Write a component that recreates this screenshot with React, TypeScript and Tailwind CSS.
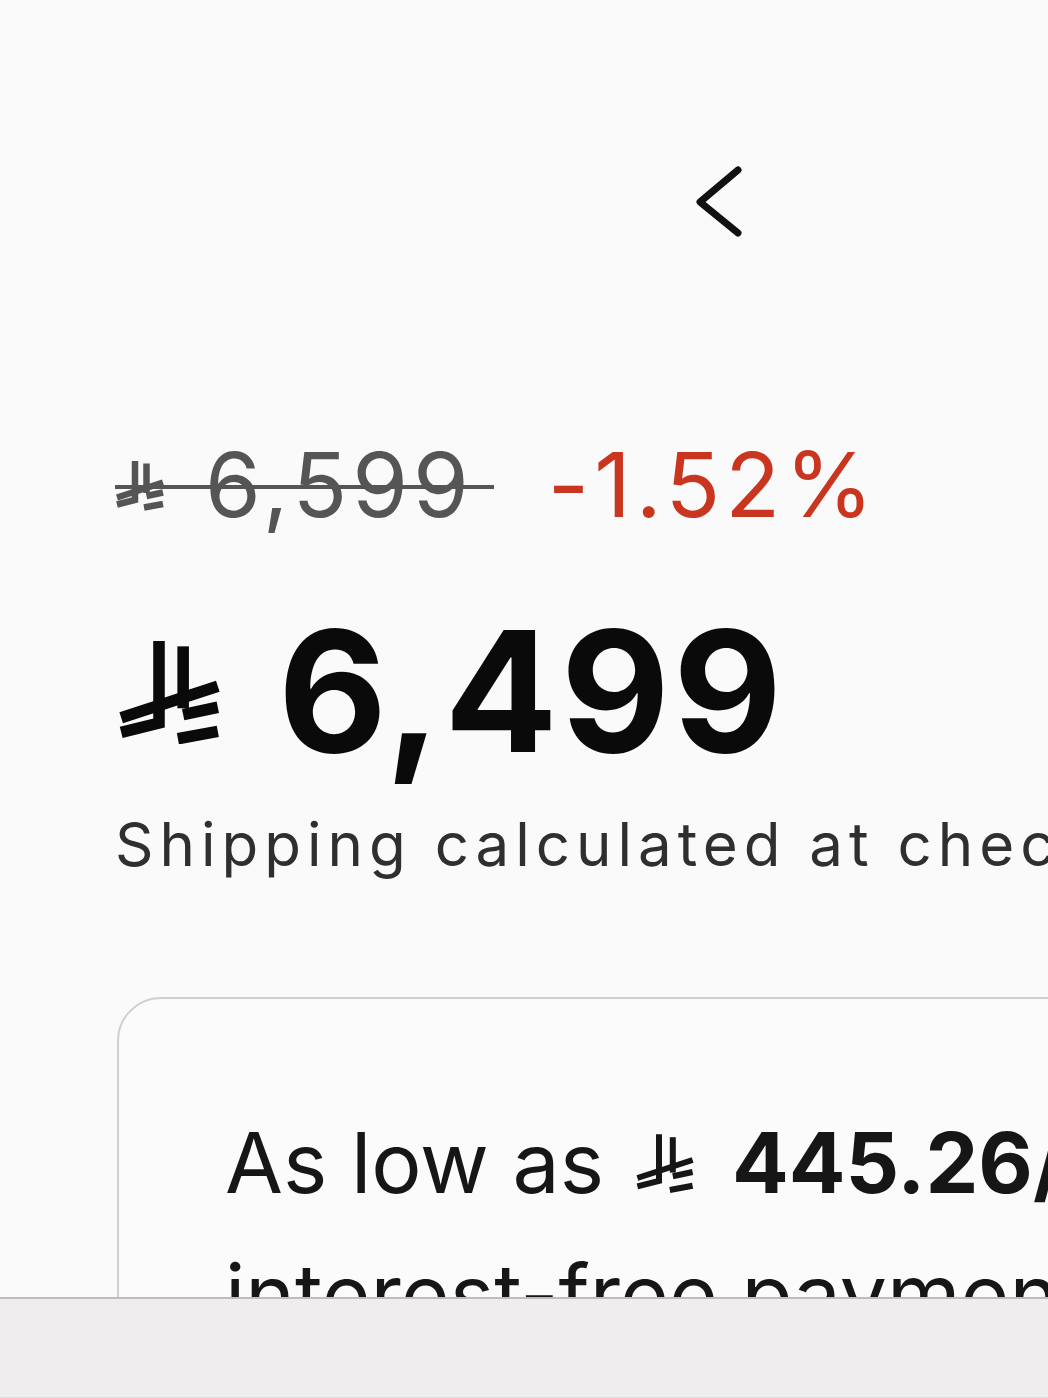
import React from "react";

function Riyal({ className, sw = 10 }: { className: string; sw?: number }) {
  return (
    <svg
      viewBox="0 0 100 100"
      className={className}
      fill="none"
      stroke="currentColor"
      strokeWidth={sw}
      strokeLinejoin="miter"
    >
      <path d="M40 2 L40 80 L4 89" />
      <path d="M63 7 L63 66" />
      <path d="M4 75 L96 45" />
      <path d="M63 72 L96 65" />
      <path d="M58 95 L96 88" />
    </svg>
  );
}

export default function App() {
  return (
    <div className="w-[1048px] h-[1398px] bg-[#fafafa] overflow-hidden flex flex-col font-['Inter',sans-serif]">
      <div className="flex-1 min-h-0 overflow-hidden flex flex-col">
        <div className="pl-[694px] pt-[164px] shrink-0">
          <svg width="50" height="76" viewBox="0 0 50 76">
            <path
              d="M44 6 L6 38 L44 69"
              fill="none"
              stroke="#111"
              strokeWidth="7"
              strokeLinecap="round"
              strokeLinejoin="round"
            />
          </svg>
        </div>

        <div className="mt-[200px] pl-[115px] flex items-start shrink-0">
          <div className="relative flex items-center text-[90px] leading-none text-[#555555]">
            <Riyal className="w-[50px] h-[56px] shrink-0" sw={13} />
            <span className="ml-[40px] tracking-[5px]">6,599</span>
            <div className="absolute left-0 right-[-20px] top-[45px] h-[4px] bg-[#555555]" />
          </div>
          <span className="ml-[74px] text-[90px] leading-none tracking-[5px] text-[#c9351f]">-1.52%</span>
        </div>

        <div className="mt-[77px] pl-[117px] flex items-center text-[168px] leading-none font-bold text-[#0a0a0a] shrink-0">
          <Riyal className="w-[105px] h-[105px] shrink-0" sw={11} />
          <span className="ml-[56px] tracking-[3px]">6,499</span>
        </div>

        <div className="mt-[39px] pl-[115px] text-[60px] leading-none text-[#2f2f2f] whitespace-nowrap tracking-[6px] shrink-0">
          Shipping calculated at checkout.
        </div>

        <div className="mt-[123px] ml-[117px] w-[1100px] h-[600px] shrink-0 border-2 border-[#cfcfcf] rounded-[44px] bg-[#fbfbfb] pt-[122px] pl-[106px]">
          <div className="flex items-center text-[84px] leading-none text-[#161616] whitespace-nowrap">
            <span>As low as</span>
            <Riyal className="ml-[30px] w-[62px] h-[60px] shrink-0" sw={10} />
            <span className="ml-[36px] font-bold">445.26/mo</span>
          </div>
          <div className="mt-[48px] text-[84px] leading-none text-[#161616] whitespace-nowrap">
            interest-free payments
          </div>
        </div>
      </div>
      <div className="h-[101px] shrink-0 bg-[#efeded] border-t-2 border-t-[#bdbdbd] border-b border-b-[#dedede]" />
    </div>
  );
}
